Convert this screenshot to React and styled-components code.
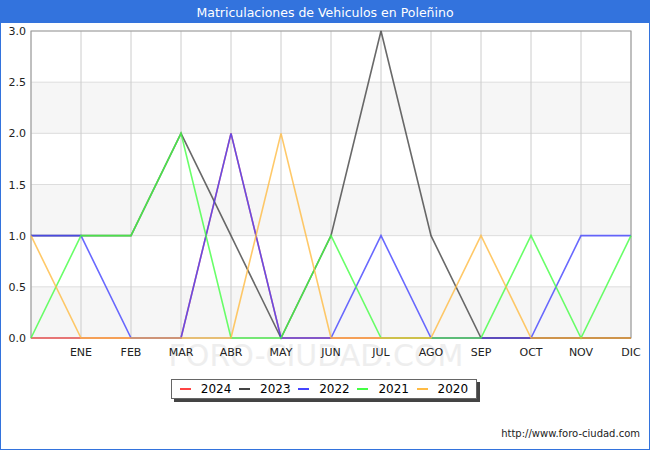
import React from "react";
import styled, { createGlobalStyle } from "styled-components";

const G = createGlobalStyle`body{margin:0;background:#fff;font-family:"DejaVu Sans",sans-serif;}`;
const Frame = styled.div`width:648px;height:448px;border:1px solid #3373dd;display:flex;flex-direction:column;position:relative;`;
const Title = styled.div`height:22px;background:#3373dd;color:#fff;font-size:12.5px;display:flex;align-items:center;justify-content:center;`;
const Legend = styled.div`position:absolute;left:170px;top:378px;width:306px;height:20px;border:1px solid #666;box-shadow:3px 3px 0 #444;background:#fff;display:flex;align-items:center;justify-content:space-around;font-size:12px;padding:0 4px;box-sizing:border-box;`;
const Item = styled.span`display:flex;align-items:center;gap:10px;&::before{content:"";width:11px;height:2px;background:${p=>p.c};}`;
const Url = styled.div`position:absolute;right:9px;top:427px;font-size:10px;color:#222;`;

const X0 = 30, DX = 50;
const y = v => 337 - v * 102.33;
const series = [
  ["2024", "#ff4444", [0,0,0,0,2,0,0,0,0,0,0,0,0]],
  ["2023", "#444444", [1,1,1,2,1,0,1,3,1,0,0,0,0]],
  ["2022", "#4444ff", [1,1,0,0,2,0,0,1,0,0,0,1,1]],
  ["2021", "#44ff44", [0,1,1,2,0,0,1,0,0,0,1,0,1]],
  ["2020", "#ffbb44", [1,0,0,0,0,2,0,0,0,1,0,0,0]],
];
const months = ["ENE","FEB","MAR","ABR","MAY","JUN","JUL","AGO","SEP","OCT","NOV","DIC"];

export default function App() {
  return (
    <>
      <G />
      <Frame>
        <Title>Matriculaciones de Vehiculos en Poleñino</Title>
        <svg width="648" height="426" viewBox="0 22 648 426" style={{display:"block"}}>
          {[0,1,2].map(i => <rect key={i} x={30} y={y(i+0.5)} width={600} height={51.2} fill="#f6f6f6" />)}
          {[0,0.5,1,1.5,2,2.5,3].map(v => <line key={v} x1={30} x2={630} y1={y(v)} y2={y(v)} stroke="#ddd" />)}
          {Array.from({length:13}).map((_,i)=><line key={i} x1={X0+i*DX} x2={X0+i*DX} y1={30} y2={337} stroke="#ccc" />)}
          <rect x={30} y={30} width={600} height={307} fill="none" stroke="#999" />
          <text x={315} y={365} fontSize="30" fill="#eeeeee" textAnchor="middle" fontFamily="DejaVu Sans">FORO-CIUDAD.COM</text>
          {[0,0.5,1,1.5,2,2.5,3].map(v => <text key={v} x={25} y={y(v)+4} fontSize="11" textAnchor="end" fill="#222">{v.toFixed(1)}</text>)}
          {months.map((m,i)=><text key={m} x={X0+(i+1)*DX} y={355} fontSize="11" textAnchor="middle" fill="#222">{m}</text>)}
          {series.map(([n,c,d]) => <polyline key={n} fill="none" stroke={c} strokeOpacity="0.8" strokeWidth="1.6" points={d.map((v,i)=>`${X0+i*DX},${y(v)}`).join(" ")} />)}
        </svg>
        <Legend>{series.map(([n,c])=><Item key={n} c={c}>{n}</Item>)}</Legend>
        <Url>http://www.foro-ciudad.com</Url>
      </Frame>
    </>
  );
}
